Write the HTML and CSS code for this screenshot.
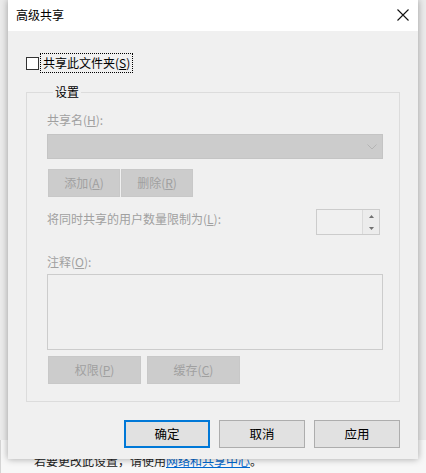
FILE: index.html
```html
<!DOCTYPE html>
<html lang="zh-CN">
<head>
<meta charset="utf-8">
<title>高级共享</title>
<link rel="stylesheet" href="styles.css">
</head>
<body>
<div class="under">
  <p class="under-text">若要更改此设置，请使用<a class="link" href="#">网络和共享中心</a>。</p>
</div>
<div class="dialog">
  <div class="titlebar">
    <span class="title">高级共享</span>
    <svg class="close" width="12" height="12" viewBox="0 0 12 12"><path d="M0.5 0.5 L11.5 11.5 M11.5 0.5 L0.5 11.5" stroke="#111" stroke-width="1.1" fill="none"/></svg>
  </div>
  <div class="body">
    <div class="check-row">
      <span class="checkbox"></span>
      <span class="check-label">共享此文件夹(<u>S</u>)</span>
    </div>
    <fieldset class="group">
      <legend class="legend">设置</legend>
      <div class="lbl lbl-name">共享名(<u>H</u>):</div>
      <div class="combo"><svg class="chev" width="10" height="6" viewBox="0 0 10 6"><path d="M0.5 0.5 L5 5 L9.5 0.5" stroke="#b4b4b4" fill="none"/></svg></div>
      <div class="btn-row btn-row-1">
        <div class="dbtn w72">添加(<u>A</u>)</div>
        <div class="dbtn w72">删除(<u>R</u>)</div>
      </div>
      <div class="limit-row">
        <div class="lbl lbl-limit">将同时共享的用户数量限制为(<u>L</u>):</div>
        <div class="spin">
          <div class="spin-field"></div>
          <div class="spin-btns">
            <div class="spin-b"><svg width="5" height="3" viewBox="0 0 5 3"><path d="M2.5 0 L5 3 L0 3 Z" fill="#707070"/></svg></div>
            <div class="spin-b"><svg width="5" height="3" viewBox="0 0 5 3"><path d="M0 0 L5 0 L2.5 3 Z" fill="#707070"/></svg></div>
          </div>
        </div>
      </div>
      <div class="lbl lbl-note">注释(<u>O</u>):</div>
      <div class="memo"></div>
      <div class="btn-row btn-row-2">
        <div class="dbtn w93">权限(<u>P</u>)</div>
        <div class="dbtn w93">缓存(<u>C</u>)</div>
      </div>
    </fieldset>
    <div class="actions">
      <div class="btn default">确定</div>
      <div class="btn">取消</div>
      <div class="btn">应用</div>
    </div>
  </div>
</div>
</body>
</html>
```
FILE: styles.css
```css
html, body {
  margin: 0;
  padding: 0;
}
body {
  width: 426px;
  height: 473px;
  overflow: hidden;
  background: #ebebeb;
  font-family: "Noto Sans CJK SC", "Noto Sans", sans-serif;
  font-size: 12px;
  color: #000;
  position: relative;
}
.under {
  position: absolute;
  left: 0;
  top: 440px;
  width: 426px;
  height: 33px;
  background: #f7f7f7;
  border-left: 1px solid #d4d4d4;
  box-sizing: border-box;
}
.under-text {
  margin: 0;
  position: absolute;
  left: 33px;
  top: 13px;
  line-height: 16px;
  color: #222;
  white-space: nowrap;
}
.link {
  color: #0066cc;
  text-decoration: underline;
}
.dialog {
  position: absolute;
  left: 8px;
  top: 0;
  width: 410px;
  height: 459px;
  background: #f0f0f0;
  box-shadow: 0 0 7px rgba(0, 0, 0, 0.35);
  display: flex;
  flex-direction: column;
}
.titlebar {
  height: 31px;
  background: #fff;
  display: flex;
  align-items: center;
  justify-content: space-between;
  padding: 0 9px 0 8px;
  flex: none;
}
.title {
  line-height: 16px;
  margin-top: -1px;
}
.close {
  display: block;
  margin-top: -1px;
}
.body {
  padding: 23px 18px 0 18px;
}
.check-row {
  display: flex;
  align-items: center;
  height: 18px;
}
.checkbox {
  width: 11px;
  height: 11px;
  border: 1px solid #333;
  background: #fff;
  flex: none;
}
.check-label {
  margin-left: 2px;
  padding: 0 1px;
  line-height: 16px;
  outline: 1px dotted #000;
  outline-offset: 0;
  border: 1px solid transparent;
}
.group {
  margin: 12px 0 0 0;
  padding: 0 16px 17px 20px;
  border: 1px solid #dcdcdc;
  min-width: 0;
}
.legend {
  padding: 0 2px;
  margin-left: 6px;
  line-height: 16px;
  color: #000;
}
.lbl {
  color: #a0a0a0;
  line-height: 16px;
  white-space: nowrap;
}
u {
  text-decoration: underline;
  text-underline-offset: 1px;
}
.lbl-name {
  margin-top: 12px;
}
.combo {
  margin-top: 6px;
  height: 25px;
  box-sizing: border-box;
  background: #cccccc;
  border: 1px solid #c4c4c4;
  display: flex;
  align-items: center;
  justify-content: flex-end;
  padding-right: 5px;
}
.chev {
  display: block;
}
.btn-row {
  display: flex;
}
.btn-row-1 {
  margin-top: 10px;
  gap: 1px;
  padding-left: 1px;
}
.btn-row-2 {
  margin-top: 6px;
  gap: 6px;
  padding-left: 1px;
}
.dbtn {
  height: 28px;
  box-sizing: border-box;
  background: #cccccc;
  border: 1px solid #c8c8c8;
  color: #a0a0a0;
  display: flex;
  align-items: center;
  justify-content: center;
  line-height: 16px;
  white-space: nowrap;
}
.w72 { width: 72px; }
.w93 { width: 93px; }
.limit-row {
  margin-top: 12px;
  display: flex;
  align-items: flex-start;
  justify-content: space-between;
  padding-right: 3px;
}
.lbl-limit {
  margin-top: 2px;
}
.spin {
  width: 64px;
  height: 26px;
  box-sizing: border-box;
  border: 1px solid #cccccc;
  display: flex;
  background: #f0f0f0;
}
.spin-field {
  flex: 1;
}
.spin-btns {
  width: 16px;
  display: flex;
  flex-direction: column;
  border-left: 1px solid #dadada;
}
.spin-b {
  flex: 1;
  display: flex;
  align-items: center;
  justify-content: center;
  background: #ececec;
}
.spin-b svg {
  display: block;
}
.lbl-note {
  margin-top: 19px;
}
.memo {
  margin-top: 4px;
  height: 76px;
  box-sizing: border-box;
  border: 1px solid #cccccc;
  background: #f0f0f0;
}
.actions {
  margin-top: 18px;
  display: flex;
  justify-content: flex-end;
  gap: 9px;
}
.btn {
  width: 86px;
  height: 28px;
  box-sizing: border-box;
  background: #e1e1e1;
  border: 1px solid #adadad;
  display: flex;
  align-items: center;
  justify-content: center;
  line-height: 16px;
  font-size: 12.5px;
}
.btn.default {
  border: 2px solid #0078d7;
}
```
